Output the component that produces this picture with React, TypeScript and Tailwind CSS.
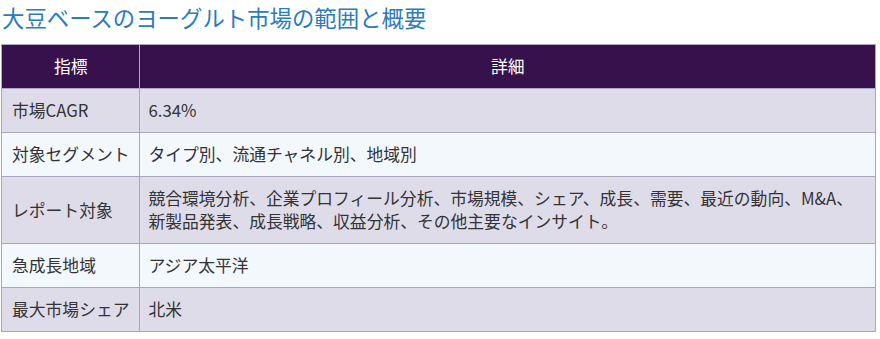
const rows = [
  { label: "市場CAGR", value: "6.34%" },
  { label: "対象セグメント", value: "タイプ別、流通チャネル別、地域別" },
  {
    label: "レポート対象",
    value:
      "競合環境分析、企業プロフィール分析、市場規模、シェア、成長、需要、最近の動向、M&A、新製品発表、成長戦略、収益分析、その他主要なインサイト。",
  },
  { label: "急成長地域", value: "アジア太平洋" },
  { label: "最大市場シェア", value: "北米" },
]

export default function App() {
  return (
    <div
      className="w-[880px] h-[339px] bg-white overflow-hidden"
      style={{ fontFamily: '"Noto Sans CJK JP", "Noto Sans", sans-serif' }}
    >
      <h2 className="pl-[2px] pt-[3px] h-[44px] text-[22.4px] leading-[29px] text-[#2b7bbd] font-normal">
        大豆ベースのヨーグルト市場の範囲と概要
      </h2>

      <table className="ml-px w-[875px] border-collapse text-[16.8px] leading-[23px] text-[#333]">
        <thead>
          <tr className="bg-[#37114b] text-white">
            <th className="w-[136px] h-[44px] border border-[#b0a6c8] font-normal text-center">指標</th>
            <th className="h-[44px] border border-[#b0a6c8] font-normal text-center">詳細</th>
          </tr>
        </thead>
        <tbody>
          {rows.map((r, i) => (
            <tr key={r.label} className={i % 2 === 0 ? "bg-[#dfdcea]" : "bg-[#f3f8fd]"}>
              <td className="border border-[#aaa5bd] px-[10px] py-[10px] whitespace-nowrap">{r.label}</td>
              <td className="border border-[#aaa5bd] px-[8px] py-[10px]">{r.value}</td>
            </tr>
          ))}
        </tbody>
      </table>
    </div>
  )
}
